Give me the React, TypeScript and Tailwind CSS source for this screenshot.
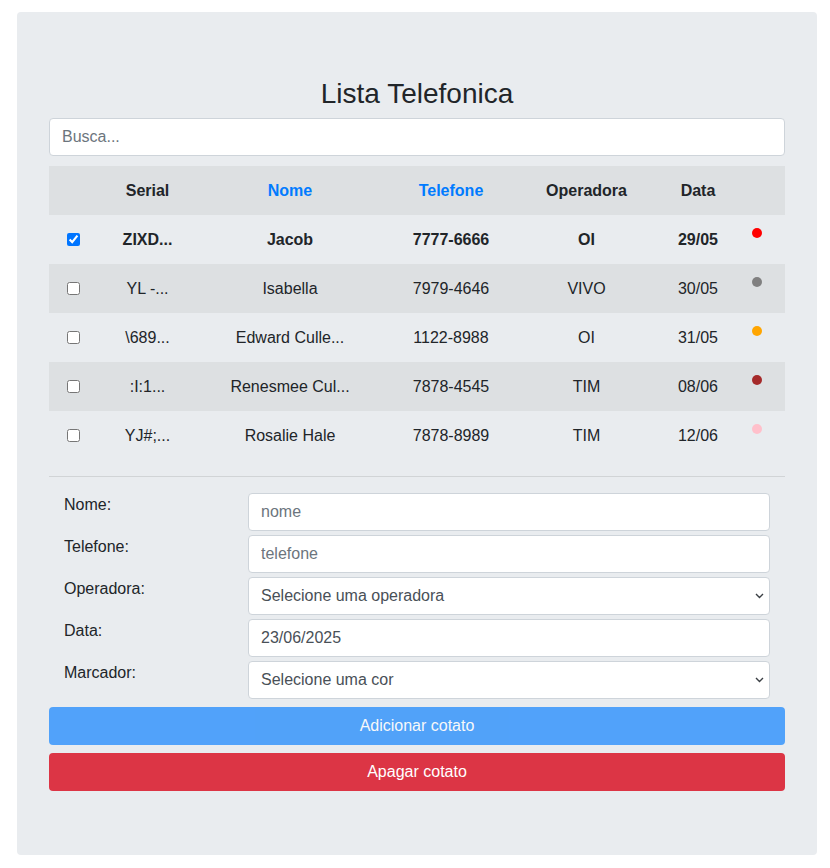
import React from "react";

type Contato = {
  serial: string;
  nome: string;
  telefone: string;
  operadora: string;
  data: string;
  cor: string;
  selecionado?: boolean;
};

const contatos: Contato[] = [
  { serial: "ZIXD...", nome: "Jacob", telefone: "7777-6666", operadora: "OI", data: "29/05", cor: "bg-[#ff0000]", selecionado: true },
  { serial: "YL -...", nome: "Isabella", telefone: "7979-4646", operadora: "VIVO", data: "30/05", cor: "bg-[#808080]" },
  { serial: "\\689...", nome: "Edward Culle...", telefone: "1122-8988", operadora: "OI", data: "31/05", cor: "bg-[#ffa500]" },
  { serial: ":I:1...", nome: "Renesmee Cul...", telefone: "7878-4545", operadora: "TIM", data: "08/06", cor: "bg-[#a52a2a]" },
  { serial: "YJ#;...", nome: "Rosalie Hale", telefone: "7878-8989", operadora: "TIM", data: "12/06", cor: "bg-[#ffc0cb]" },
];

function Chevron() {
  return (
    <svg
      className="absolute right-[6px] top-1/2 -translate-y-1/2 pointer-events-none"
      width="9"
      height="6"
      viewBox="0 0 9 6"
    >
      <path d="M1 1 L4.5 4.5 L8 1" fill="none" stroke="#3a3f44" strokeWidth="1.4" />
    </svg>
  );
}

function CampoTexto({ placeholder, value }: { placeholder?: string; value?: string }) {
  return (
    <input
      type="text"
      placeholder={placeholder}
      defaultValue={value}
      className="flex-1 h-[38px] bg-white border border-[#ced4da] rounded px-3 text-base text-[#495057] placeholder:text-[#6c757d] outline-none"
    />
  );
}

function CampoSelect({ texto }: { texto: string }) {
  return (
    <div className="flex-1 relative">
      <select className="w-full h-[38px] appearance-none bg-white border border-[#ced4da] rounded px-3 text-base text-[#495057] outline-none">
        <option>{texto}</option>
      </select>
      <Chevron />
    </div>
  );
}

function LinhaForm({ label, children }: { label: string; children: React.ReactNode }) {
  return (
    <div className="flex px-[15px] gap-[30px]">
      <label className="w-[154px] leading-6 text-[#212529]">{label}</label>
      {children}
    </div>
  );
}

export default function App() {
  return (
    <div className="min-h-screen bg-white pt-[12px] pl-[17px] font-['Liberation_Sans',Arial,sans-serif] text-base text-[#212529]">
      <div className="w-[800px] bg-[#e9ecef] rounded px-8 pt-16 pb-16">
        <h3 className="text-[28px] leading-[1.2] text-center pt-px mb-[7px]">Lista Telefonica</h3>
        <input
          type="text"
          placeholder="Busca..."
          className="w-full h-[38px] bg-white border border-[#ced4da] rounded px-3 text-base placeholder:text-[#6c757d] outline-none"
        />

        <table className="w-full table-fixed mt-[10px] border-collapse">
          <colgroup>
            <col className="w-[50px]" />
            <col className="w-[97px]" />
            <col className="w-[188px]" />
            <col className="w-[134px]" />
            <col className="w-[137px]" />
            <col className="w-[86px]" />
            <col className="w-[44px]" />
          </colgroup>
          <thead>
            <tr className="bg-black/5 h-[49px] font-bold text-center [&>th]:pt-[2px]">
              <th></th>
              <th>Serial</th>
              <th className="text-[#007bff]">Nome</th>
              <th className="text-[#007bff]">Telefone</th>
              <th>Operadora</th>
              <th>Data</th>
              <th></th>
            </tr>
          </thead>
          <tbody>
            {contatos.map((c, i) => (
              <tr
                key={c.telefone + i}
                className={`h-[49px] text-center [&>td]:pt-[2px] ${i % 2 === 1 ? "bg-black/5" : ""} ${c.selecionado ? "font-bold" : ""}`}
              >
                <td className="align-middle">
                  <input type="checkbox" defaultChecked={c.selecionado} className="w-[13px] h-[13px] align-middle mt-[-3px] ml-[-2px]" />
                </td>
                <td>{c.serial}</td>
                <td>{c.nome}</td>
                <td>{c.telefone}</td>
                <td>{c.operadora}</td>
                <td>{c.data}</td>
                <td className="align-top !pt-[13px] pl-[11px] text-left">
                  <div className={`w-[10px] h-[10px] rounded-full ${c.cor}`}></div>
                </td>
              </tr>
            ))}
          </tbody>
        </table>

        <hr className="mt-4 mb-4 border-0 border-t border-black/10" />

        <div className="flex flex-col gap-1">
          <LinhaForm label="Nome:">
            <CampoTexto placeholder="nome" />
          </LinhaForm>
          <LinhaForm label="Telefone:">
            <CampoTexto placeholder="telefone" />
          </LinhaForm>
          <LinhaForm label="Operadora:">
            <CampoSelect texto="Selecione uma operadora" />
          </LinhaForm>
          <LinhaForm label="Data:">
            <CampoTexto value="23/06/2025" />
          </LinhaForm>
          <LinhaForm label="Marcador:">
            <CampoSelect texto="Selecione uma cor" />
          </LinhaForm>
        </div>

        <button className="w-full h-[38px] mt-2 rounded bg-[#007bff] opacity-[0.65] text-white text-base">
          Adicionar cotato
        </button>
        <button className="w-full h-[38px] mt-2 rounded bg-[#dc3545] text-white text-base">
          Apagar cotato
        </button>
      </div>
    </div>
  );
}
